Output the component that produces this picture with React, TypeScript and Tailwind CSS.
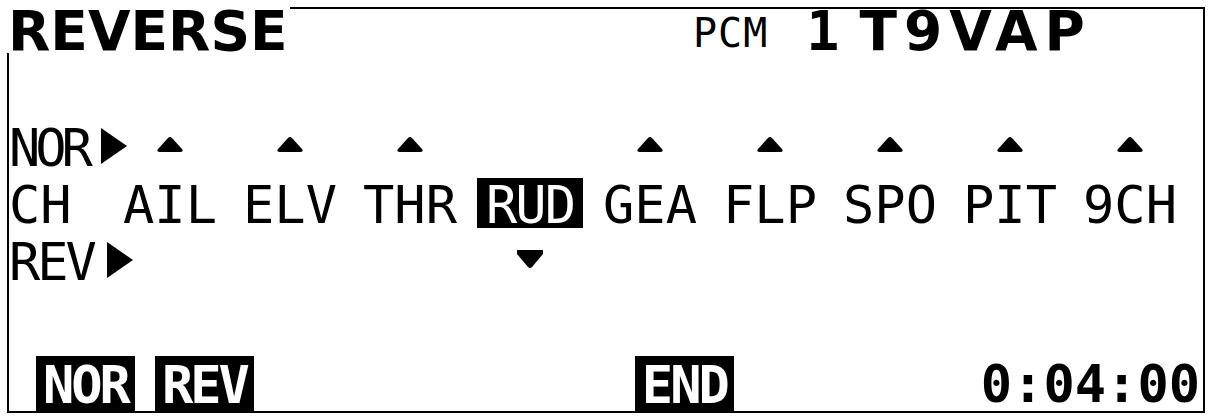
import React from 'react'

const lcd = { fontFamily: '"DejaVu Sans Mono", "Liberation Mono", monospace' }
const wide = { fontFamily: '"DejaVu Sans", "Liberation Sans", sans-serif' }

const channels = ['AIL', 'ELV', 'THR', 'RUD', 'GEA', 'FLP', 'SPO', 'PIT', '9CH']
const reversed = ['RUD']
const selected = 'RUD'

function UpMark() {
  return (
    <svg width="28" height="17" viewBox="0 0 28 17" className="block shrink-0">
      <path d="M12 2 Q14 0 16 2 L26 13 Q28 16 24 16 L4 16 Q0 16 2 13 Z" fill="#000" />
    </svg>
  )
}

function DownMark() {
  return (
    <svg width="28" height="20" viewBox="0 0 28 20" className="block shrink-0">
      <path d="M1 1 L27 1 L27 5 L16 18 Q14 20 12 18 L1 5 Z" fill="#000" />
    </svg>
  )
}

function RightMark() {
  return (
    <svg width="28" height="38" viewBox="0 0 28 38" className="block shrink-0">
      <path d="M1 1 L27 19 L1 37 Z" fill="#000" />
    </svg>
  )
}

function SoftKey({ label }: { label: string }) {
  return (
    <div className="h-[55px] bg-black text-white px-[7px] flex items-center text-[52px] leading-none tracking-[-3px] font-bold">
      <span className="-mb-[2px]">{label}</span>
    </div>
  )
}

export default function App() {
  return (
    <div className="w-[1212px] h-[420px] bg-white text-black pt-[7px] pl-[7px] overflow-hidden" style={lcd}>
      <div className="w-[1198px] flex flex-col h-[406px]">
        {/* header */}
        <div className="flex items-start">
          <div className="w-[283px] pt-[2px] text-[55px] leading-[44px] font-bold tracking-[0px] pl-[1px]" style={wide}>REVERSE</div>
          <div className="flex-1 border-t-2 border-r-2 border-black h-[46px] flex items-start">
            <div className="ml-[403px] mt-[7px] text-[40px] leading-[34px] tracking-[1px]">PCM</div>
            <div className="ml-[38px] text-[55px] leading-[44px] font-bold">1</div>
            <div className="ml-[20px] text-[55px] leading-[44px] font-bold tracking-[7px]" style={wide}>T9VAP</div>
          </div>
        </div>

        {/* body */}
        <div className="flex-1 border-l-2 border-r-2 border-b-2 border-black flex flex-col">
          <div className="pt-[69px] grid grid-cols-[101px_repeat(9,120px)] grid-rows-[57px_57px_57px] text-[52px] leading-none">
            {/* NOR row */}
            <div className="flex items-start whitespace-nowrap overflow-visible">
              <span className="tracking-[-5px]">NOR</span>
              <span className="ml-[12px] mt-[5px]"><RightMark /></span>
            </div>
            {channels.map((c) => (
              <div key={'n' + c} className="flex justify-center pt-[14px]">
                {!reversed.includes(c) && <UpMark />}
              </div>
            ))}

            {/* CH row */}
            <div>CH</div>
            {channels.map((c) => (
              <div key={'c' + c} className="flex justify-center">
                {c === selected ? (
                  <span className="bg-black text-white px-[9px] h-[50px] -mt-[1px] pt-[1px] tracking-[-2px]">{c}</span>
                ) : (
                  <span>{c}</span>
                )}
              </div>
            ))}

            {/* REV row */}
            <div className="flex items-start whitespace-nowrap">
              <span className="tracking-[-3px]">REV</span>
              <span className="ml-[12px] mt-[5px]"><RightMark /></span>
            </div>
            {channels.map((c) => (
              <div key={'r' + c} className="flex justify-center pt-[13px]">
                {reversed.includes(c) && <DownMark />}
              </div>
            ))}
          </div>

          <div className="flex-1" />

          {/* soft keys */}
          <div className="flex items-end">
            <div className="ml-[27px]"><SoftKey label="NOR" /></div>
            <div className="ml-[20px]"><SoftKey label="REV" /></div>
            <div className="ml-[381px]"><SoftKey label="END" /></div>
            <div className="flex-1" />
            <div className="mr-[3px] mb-[5px] text-[52px] leading-[44px] font-bold">0:04:00</div>
          </div>
        </div>
      </div>
    </div>
  )
}
